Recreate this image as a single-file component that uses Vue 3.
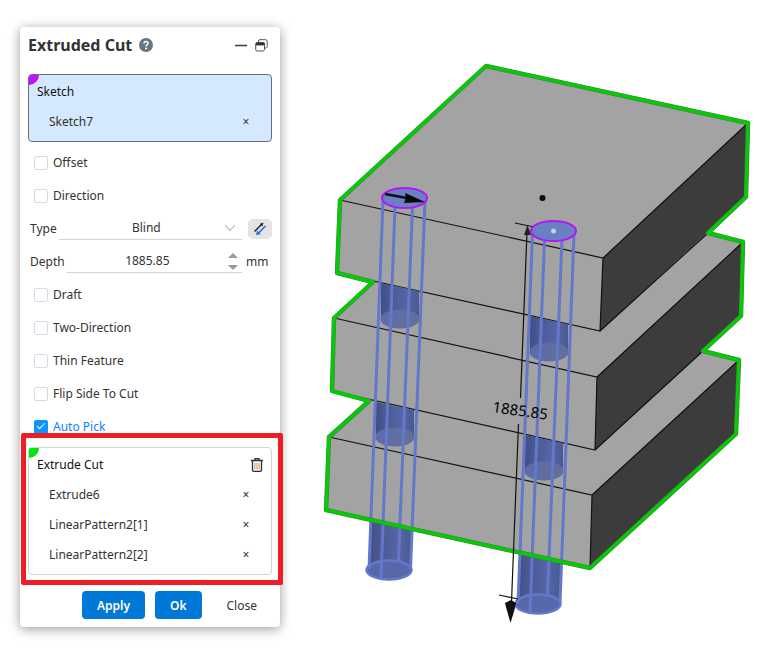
<script setup>
import { ref } from 'vue'

const sketches = ref(['Sketch7'])
const bodies = ref(['Extrude6', 'LinearPattern2[1]', 'LinearPattern2[2]'])
const placement = ref([
  { id: 'offset', label: 'Offset', on: false },
  { id: 'direction', label: 'Direction', on: false },
])
const options = ref([
  { id: 'draft', label: 'Draft', on: false },
  { id: 'two-direction', label: 'Two-Direction', on: false },
  { id: 'thin-feature', label: 'Thin Feature', on: false },
  { id: 'flip-side', label: 'Flip Side To Cut', on: false },
  { id: 'auto-pick', label: 'Auto Pick', on: true },
])
const type = ref('Blind')
const depth = ref('1885.85')

function step(delta) {
  depth.value = (Number(depth.value) + delta).toFixed(2)
}

const outline = 'M340 200 L486 66 L748 123 L746 197 L708 233 L743 242 L741 316 L703 351 L739 360 L736 434 L590 568 L326 510 L329 437 L369 401 L332 391 L334 318 L373 282 L337 273 Z'
const holes = [
  'M381 283 L419 291 V319 A19 9 0 0 1 381 319 Z',
  'M376 402 L414 410 V437 A19 9 0 0 1 376 437 Z',
  'M530 316 L568 324 V352 A19 9 0 0 1 530 352 Z',
  'M525 435 L563 443 V471 A19 9 0 0 1 525 471 Z',
]
const holeFloors = [[400, 319], [395, 437], [549, 352], [544, 471]]
const rails = [
  'M383 201 L369 569', 'M395 207 L381 578', 'M412.500 207 L398.500 561', 'M425 201 L410.500 569',
  'M532.500 234 L518 603', 'M544.500 240 L530 612', 'M562 240 L547.500 595', 'M574 234 L560 603',
]
</script>

<template>
  <main class="workspace">
    <form class="panel" @submit.prevent>
      <header class="header">
        <h1>Extruded Cut</h1>
        <button type="button" class="icon help" aria-label="Help">
          <svg viewBox="0 0 14 14" width="14" height="14">
            <circle cx="7" cy="7" r="7" fill="#69747f" />
            <path d="M5 5.500 C5 2.700 9.200 2.800 9.100 5.300 C9 6.800 7.100 6.700 7.100 8.400" fill="none" stroke="#fff" stroke-width="1.500" />
            <circle cx="7.100" cy="10.500" r="1" fill="#fff" />
          </svg>
        </button>
        <span class="grow"></span>
        <button type="button" class="icon" aria-label="Minimize">
          <svg viewBox="0 0 12 12" width="12" height="12"><path d="M0 6.500 H12" stroke="#444" stroke-width="1.600" /></svg>
        </button>
        <button type="button" class="icon" aria-label="Undock">
          <svg viewBox="0 0 13 13" width="13" height="13" fill="none" stroke="#555">
            <path d="M3.500 3 V2 Q3.500 .7 5 .7 H10.500 Q12.200 .7 12.200 2.200 V7.500 Q12.200 9 10.800 9 H10" />
            <rect x=".7" y="3.500" width="8.800" height="8.500" rx="1.500" />
            <path d="M1 5 H9.500" stroke="#333" stroke-width="2.800" />
          </svg>
        </button>
      </header>

      <section class="picker active">
        <div class="picker-head"><h2>Sketch</h2></div>
        <ul>
          <li v-for="(name, i) in sketches" :key="name">
            <span>{{ name }}</span>
            <button type="button" class="remove" :aria-label="'Remove ' + name" @click="sketches.splice(i, 1)">×</button>
          </li>
        </ul>
      </section>

      <div class="rows">
        <div v-for="o in placement" :key="o.id" class="row check">
          <input :id="o.id" v-model="o.on" type="checkbox" />
          <label :for="o.id">{{ o.label }}</label>
        </div>
        <div class="row">
          <label for="type">Type</label>
          <div class="field">
            <select id="type" v-model="type">
              <option>Blind</option>
              <option>Through All</option>
            </select>
            <svg class="chevron" viewBox="0 0 12 8" width="12" height="8"><path d="M1 1 L6 6.500 L11 1" fill="none" stroke="#bfc3ca" stroke-width="1.200" /></svg>
          </div>
          <button type="button" class="flip" aria-label="Reverse direction">
            <svg viewBox="0 0 14 14" width="14" height="14">
              <path d="M1.500 9.500 L8.500 2.500" stroke="#222" stroke-width="1.500" />
              <path d="M10.500 .8 L6.800 1.800 L9.300 4.600 Z" fill="#222" />
              <path d="M12.500 4 L5.500 11" stroke="#2b72d8" stroke-width="1.700" />
              <path d="M3 13 L4 8.600 L7.800 12.300 Z" fill="#2b72d8" />
            </svg>
          </button>
        </div>
        <div class="row">
          <label for="depth">Depth</label>
          <div class="field">
            <input id="depth" v-model="depth" type="text" inputmode="decimal" />
            <div class="stepper">
              <button type="button" aria-label="Increase depth" @click="step(1)"><svg viewBox="0 0 10 5" width="10" height="5"><path d="M0 5 L5 0 L10 5 Z" fill="#999" /></svg></button>
              <button type="button" aria-label="Decrease depth" @click="step(-1)"><svg viewBox="0 0 10 5" width="10" height="5"><path d="M0 0 L5 5 L10 0 Z" fill="#999" /></svg></button>
            </div>
          </div>
          <span class="unit">mm</span>
        </div>
        <div v-for="o in options" :key="o.id" class="row check">
          <input :id="o.id" v-model="o.on" type="checkbox" />
          <label :for="o.id">{{ o.label }}</label>
        </div>
      </div>

      <section class="picker marked">
        <div class="picker-head">
          <h2>Extrude Cut</h2>
          <button type="button" class="icon" aria-label="Clear all" @click="bodies = []">
            <svg viewBox="0 0 12 14" width="12" height="14" fill="none" stroke="#222c44">
              <path d="M0 2.500 H12 M4 2.500 V.7 H8 V2.500" stroke-width="1.300" />
              <path d="M1.500 3 V12 Q1.500 13.300 3 13.300 H9 Q10.500 13.300 10.500 12 V3" stroke-width="1.300" />
              <path d="M3.900 5 V11.500 M6 5 V11.500 M8.100 5 V11.500" stroke="#d9913c" />
            </svg>
          </button>
        </div>
        <ul>
          <li v-for="(name, i) in bodies" :key="name">
            <span>{{ name }}</span>
            <button type="button" class="remove" :aria-label="'Remove ' + name" @click="bodies.splice(i, 1)">×</button>
          </li>
        </ul>
      </section>

      <footer class="actions">
        <button type="submit" class="primary">Apply</button>
        <button type="button" class="primary">Ok</button>
        <button type="button">Close</button>
      </footer>
    </form>

    <svg class="viewer" viewBox="300 0 459 647" role="img" aria-label="Three stacked plates with two through cuts">
      <defs>
        <linearGradient id="bore">
          <stop offset="0" stop-color="#414f84" />
          <stop offset=".25" stop-color="#4b5a94" />
          <stop offset=".7" stop-color="#5565a6" />
          <stop offset="1" stop-color="#49598f" />
        </linearGradient>
        <linearGradient id="floor">
          <stop offset="0" stop-color="#5d6baa" />
          <stop offset="1" stop-color="#646f98" />
        </linearGradient>
      </defs>

      <g fill="url(#bore)">
        <path d="M371 519 L413 528 L411 569 H369 Z" />
        <path d="M520 551 L561 561 L560 604 H518 Z" />
      </g>
      <g fill="#5867a9" stroke="#6378ca" stroke-width="2.500">
        <ellipse cx="389" cy="570" rx="22.500" ry="9.500" />
        <ellipse cx="538" cy="604" rx="22.500" ry="9.500" />
      </g>

      <g class="plates">
        <path d="M329 437 L486 297 L739 360 L592 495 L590 568 L326 510 Z" fill="#a3a3a3" />
        <path d="M592 495 L739 360 L736 434 L590 568 Z" fill="#3c3c3c" />
        <path d="M329 437 L592 495 L739 360 M592 495 L590 568" class="edge" />
        <path d="M334 318 L486 180 L743 242 L597 377 L595 450 L332 391 Z" fill="#a3a3a3" />
        <path d="M597 377 L743 242 L741 316 L595 450 Z" fill="#3c3c3c" />
        <path d="M334 318 L597 377 L743 242 M597 377 L595 450 L332 391 M595 450 L703 351" class="edge" />
        <path d="M340 200 L486 66 L748 123 L603 258 L600 331 L337 273 Z" fill="#a3a3a3" />
        <path d="M603 258 L748 123 L746 197 L600 331 Z" fill="#3c3c3c" />
        <path d="M340 200 L603 258 L748 123 M603 258 L600 331 L337 273 M600 331 L708 233" class="edge" />
      </g>

      <path v-for="d in holes" :key="d" :d="d" fill="url(#bore)" />
      <ellipse v-for="[x, y] in holeFloors" :key="x" :cx="x" :cy="y" rx="19.500" ry="9.500" fill="url(#floor)" />
      <path v-for="d in rails" :key="d" :d="d" fill="none" stroke="#6378ca" stroke-width="3" />

      <path :d="outline" fill="none" stroke="#487848" stroke-width="4.400" stroke-linejoin="round" />
      <path :d="outline" fill="none" stroke="#05cb05" stroke-width="3.400" stroke-linejoin="round" />

      <path d="M527 232 L520.500 398 M518.500 424 L511.500 602 M515 223 L534 227 M499 595 L518 599" class="edge" />
      <path d="M527.500 225 L531 235 H524 Z" fill="#222" />
      <path d="M510.500 623 L506 607 L505 603 L511 600 L516 603 L515 608 Z" fill="#111" />

      <g fill="#6a7fc4" stroke="#b514f4" stroke-width="2">
        <ellipse cx="404.500" cy="198" rx="22.500" ry="10" />
        <ellipse cx="553.500" cy="231" rx="22.500" ry="10" />
      </g>
      <path d="M385 194 L407 198" stroke="#111" stroke-width="2.500" />
      <path d="M405 193 L425 202 L404 203 L406 198 Z" fill="#080808" />
      <circle cx="542.500" cy="198" r="3" fill="#080808" />
      <circle cx="553.500" cy="231" r="2.500" fill="#d0d0d0" />
      <text x="492" y="412" class="dimension" transform="rotate(8 492 412)">1885.85</text>
    </svg>
  </main>
</template>

<style>
body {
  margin: 0;
  background: #fff;
}
</style>

<style scoped>
.workspace {
  display: flex;
  align-items: flex-start;
  gap: 20px;
  padding-left: 20px;
  color: #333;
  font: 12px/20px "Noto Sans", "Open Sans", sans-serif;
}

.panel {
  flex: 0 0 260px;
  box-sizing: border-box;
  min-width: 0;
  margin: 27px 0 20px;
  padding: 0 8px 8px;
  border-radius: 4px;
  background: #fff;
  box-shadow: 0 2px 12px rgba(0, 0, 0, 0.4);
}

.viewer {
  display: block;
  flex: 1 1 0;
  min-width: 0;
}

button,
input,
select {
  margin: 0;
  color: inherit;
  font: inherit;
}

button {
  padding: 0;
  border: 0;
  background: none;
  cursor: pointer;
}

svg {
  display: block;
}

h1,
h2 {
  margin: 0;
}

.header {
  display: flex;
  align-items: center;
  gap: 8px;
  height: 36px;
  margin-bottom: 11px;
  padding-right: 4px;
}

h1 {
  font-size: 16px;
  font-weight: 700;
}

.help {
  margin-left: -1px;
}

.grow {
  flex: 1;
}

.picker {
  position: relative;
  padding: 2px 8px 4px;
  border: 1px solid #d3d3d6;
  border-radius: 4px;
}

.picker::before {
  content: "";
  position: absolute;
  top: 0;
  left: 0;
  width: 10px;
  height: 10px;
  border-radius: 2px 0 10px 0;
  background: #00e608;
}

.picker.active {
  border-color: #686d78;
  background: #d4e8ff;
}

.picker.active::before {
  background: #bd12ff;
}

.marked::after {
  content: "";
  position: absolute;
  inset: -15px -12px -11px -8px;
  border: 5px solid #ee1c25;
  border-radius: 2px;
  pointer-events: none;
}

.picker-head {
  display: flex;
  align-items: center;
  justify-content: space-between;
  height: 30px;
}

h2 {
  color: #111;
  font-size: 12px;
  font-weight: 400;
}

ul {
  margin: 0;
  padding: 0 12px;
  list-style: none;
}

li {
  display: flex;
  align-items: center;
  justify-content: space-between;
  height: 30px;
}

.remove {
  width: 10px;
}

.rows {
  padding: 4px 0;
}

.row {
  display: flex;
  align-items: center;
  height: 33px;
  padding-left: 2px;
}

.check {
  gap: 5px;
  padding-left: 6px;
}

.check input {
  appearance: none;
  width: 14px;
  height: 14px;
  border: 1px solid #dadae6;
  border-radius: 2px;
}

.check input:checked {
  border-color: #0d94ff;
  background: #0d94ff;
}

.check input:checked::before {
  content: "";
  display: block;
  width: 3px;
  height: 7px;
  margin: 0 auto;
  border: solid #fff;
  border-width: 0 1px 1px 0;
  transform: rotate(45deg);
}

.check input:checked + label {
  color: #0a84ff;
}

.field {
  display: flex;
  flex: 1;
  align-items: center;
  box-sizing: border-box;
  min-width: 0;
  height: 22px;
  margin-left: 2px;
  border-bottom: 1px solid #d3d3d3;
}

.field select,
.field input {
  flex: 1;
  min-width: 0;
  padding: 0;
  border: 0;
  outline: 0;
  background: transparent;
  text-align: center;
  text-align-last: center;
  appearance: none;
}

.field select {
  padding-left: 10px;
}

.chevron {
  margin-right: 6px;
}

.stepper {
  display: grid;
  gap: 7px;
  margin-right: 4px;
}

.flip {
  display: grid;
  place-items: center;
  width: 24px;
  height: 20px;
  margin-left: 6px;
  border-radius: 5px;
  background: #e4e4e4;
}

.unit {
  width: 26px;
  margin-left: 4px;
}

.actions {
  display: flex;
  justify-content: flex-end;
  gap: 10px;
  padding-top: 16px;
}

.actions button {
  height: 28px;
  padding: 2px 15px 0;
  border-radius: 4px;
}

.actions .primary {
  background: #0078d7;
  color: #fff;
  font-weight: 600;
}

.edge {
  fill: none;
  stroke: #111;
  stroke-width: 1.2;
}

.dimension {
  fill: #000;
  font-size: 15px;
}
</style>
